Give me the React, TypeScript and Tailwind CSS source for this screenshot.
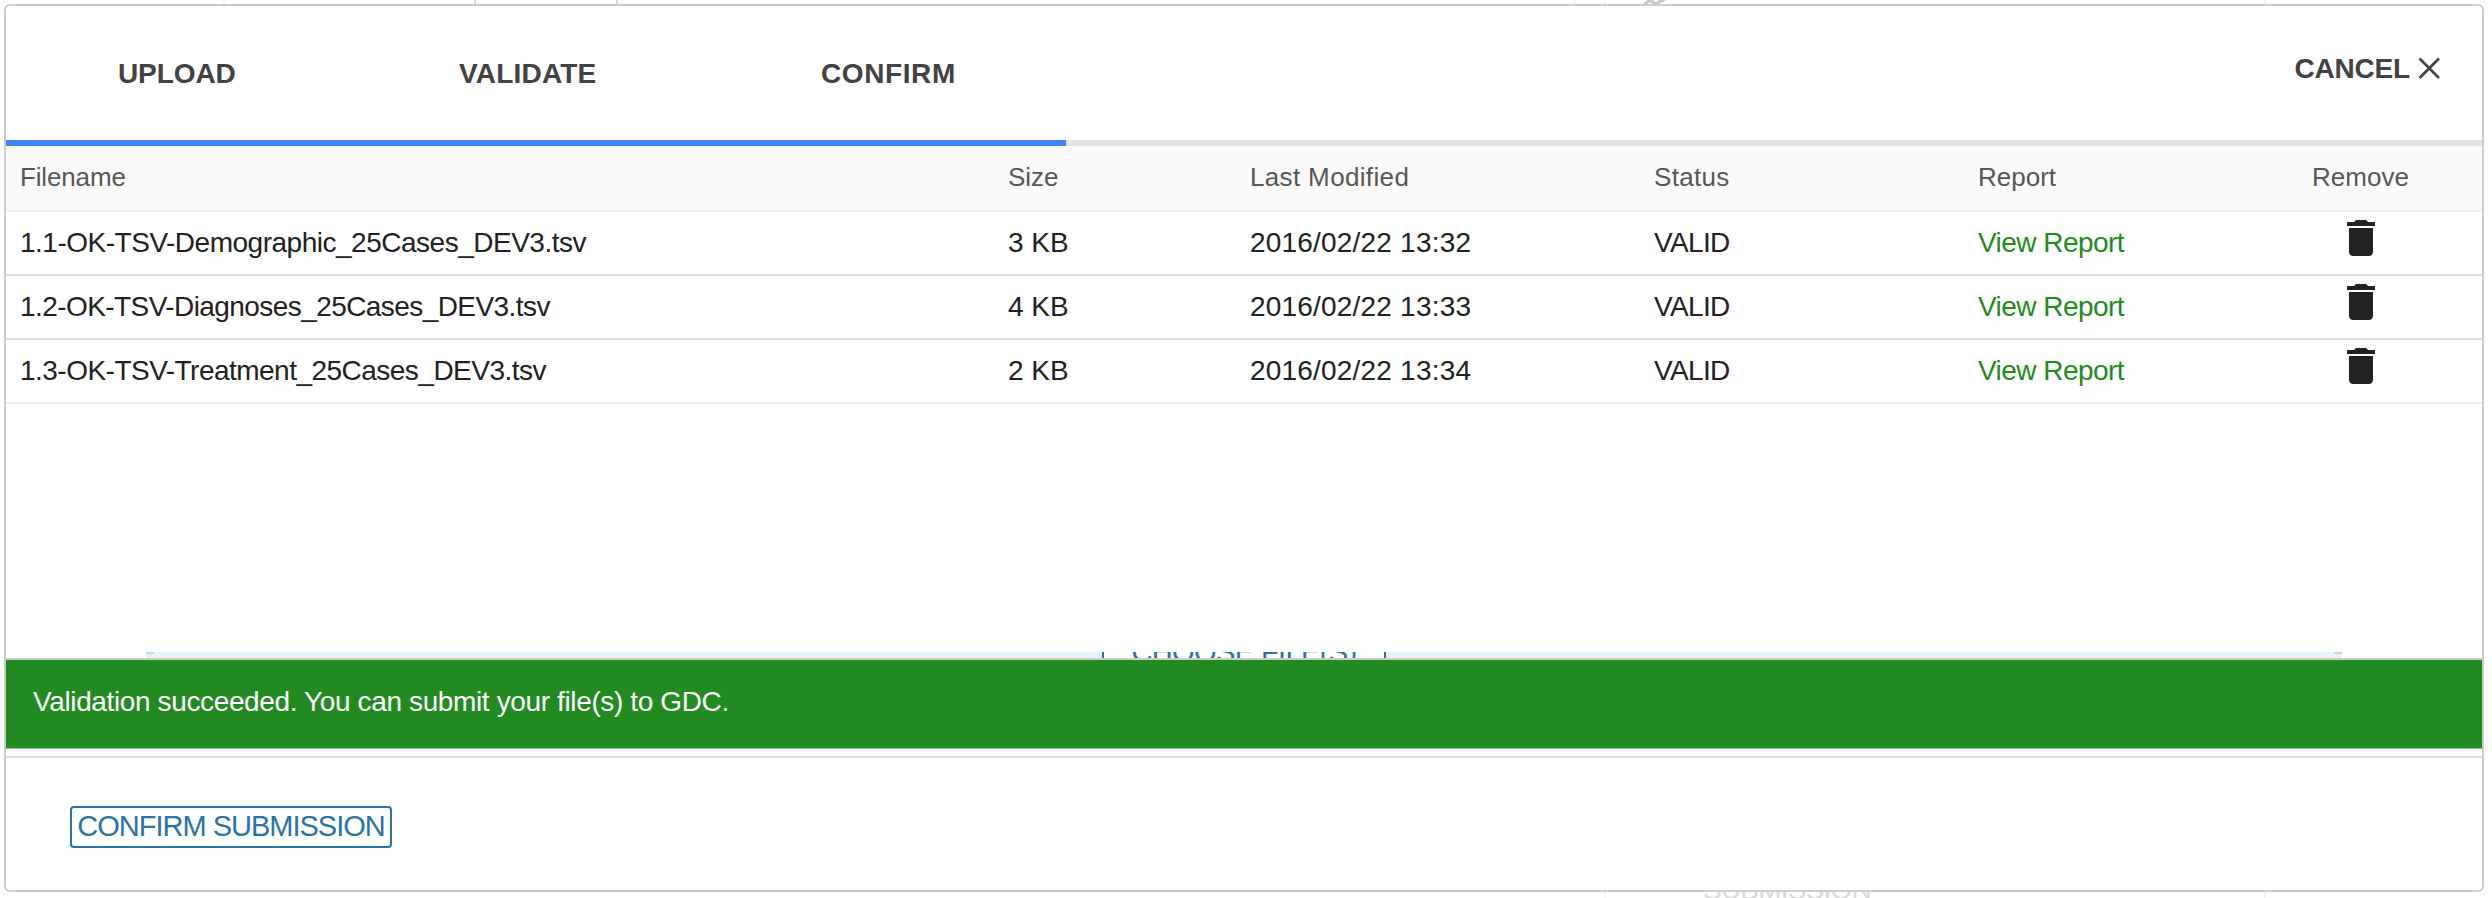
type FileRow = { name: string; tracking: string; size: string; modified: string };

const files: FileRow[] = [
  { name: '1.1-OK-TSV-Demographic_25Cases_DEV3.tsv', tracking: 'tracking-[-0.49px]', size: '3 KB', modified: '2016/02/22 13:32' },
  { name: '1.2-OK-TSV-Diagnoses_25Cases_DEV3.tsv', tracking: 'tracking-[-0.57px]', size: '4 KB', modified: '2016/02/22 13:33' },
  { name: '1.3-OK-TSV-Treatment_25Cases_DEV3.tsv', tracking: 'tracking-[-0.52px]', size: '2 KB', modified: '2016/02/22 13:34' },
];

const rowGrid = 'grid grid-cols-[988px_242px_404px_324px_261px_1fr] items-center pl-3.5 whitespace-nowrap';

function TrashIcon() {
  return (
    <svg viewBox="0 0 24 24" className="size-12" fill="#212121">
      <path d="M6 19c0 1.1.9 2 2 2h8c1.1 0 2-.9 2-2V7H6v12zM19 4h-3.5l-1-1h-5l-1 1H5v2h14V4z" />
    </svg>
  );
}

function PageBehind() {
  return (
    <div className="absolute inset-0 text-[#dadada]">
      <div className="absolute top-0 left-[223px] h-1 w-0.5 bg-[#f4f4f4]" />
      <div className="absolute top-0 left-[474px] h-1 w-36 border-x-2 border-[#d0e0e9]" />
      <div className="absolute top-0 left-[1574px] h-1 w-8 border-x-2 border-[#f6f6f6]" />
      <svg className="absolute top-0 left-[1640px] h-1 w-8" viewBox="0 0 32 4" fill="none" stroke="#c9c9c9" strokeWidth="3">
        <path d="M4 5 L10 0 M10 0 L16 5 M15 5 L22 0 M22 1 L28 -3 M10 -1 L14 3 L20 3" />
      </svg>
      <div className="absolute top-0 left-[2264px] h-1 w-0.5 bg-[#f4f4f4]" />
      <div className="absolute bottom-0 left-[1604px] h-1.5 w-0.5 bg-[#f6f6f6]" />
      <div className="absolute bottom-0 left-[2264px] h-1.5 w-0.5 bg-[#f4f4f4]" />
      <div className="absolute bottom-0 left-[1703px] flex h-1.5 flex-col justify-end overflow-hidden text-[28px] leading-4 tracking-[-0.8px]">
        SUBMISSION
      </div>
    </div>
  );
}

export default function App() {
  return (
    <div className="relative h-[898px] w-[2492px] overflow-hidden bg-white pt-1 pl-1 font-['Liberation_Sans',Arial,sans-serif]">
      <PageBehind />
      <main className="relative flex h-[888px] w-[2480px] flex-col overflow-hidden rounded-md border-2 border-[#cccccc] bg-white">
        <header className="flex h-[134px] shrink-0 justify-between text-[28px] font-bold text-[#424242]">
          <nav className="grid grid-cols-[341px_362px_auto] items-center pt-0.5 pl-[112px]">
            <span className="tracking-[-0.1px]">UPLOAD</span>
            <span className="tracking-[0.2px]">VALIDATE</span>
            <span className="tracking-[0.6px]">CONFIRM</span>
          </nav>
          <button className="mt-11 mr-[41px] flex h-10 items-center gap-[7px]">
            <span className="-mt-0.5 tracking-[-0.2px]">CANCEL</span>
            <svg viewBox="0 0 24 24" className="-mt-1 size-6" stroke="#424242" strokeWidth="2.6" fill="none">
              <path d="M2.5 2.5 L22 22 M22 2.5 L2.5 22" />
            </svg>
          </button>
        </header>

        <div className="h-1.5 shrink-0 bg-[#e4e4e4]">
          <div className="h-full w-[1060px] bg-[#4286f5]" />
        </div>

        <section className="shrink-0">
          <div className={`${rowGrid} h-[66px] border-b-2 border-[#eeeeee] bg-[#fafafa] pb-0.5 text-[26px] text-[#575757]`}>
            <span className="tracking-[-0.15px]">Filename</span>
            <span>Size</span>
            <span className="tracking-[0.35px]">Last Modified</span>
            <span className="tracking-[0.3px]">Status</span>
            <span>Report</span>
            <span className="text-center">Remove</span>
          </div>
          {files.map((f) => (
            <div
              key={f.name}
              className={`${rowGrid} h-16 border-b-2 border-[#dedede] text-[28px] text-[#212121] last:border-[#eeeeee]`}
            >
              <span className={f.tracking}>{f.name}</span>
              <span>{f.size}</span>
              <span className="tracking-[0.2px]">{f.modified}</span>
              <span className="tracking-[-0.65px]">VALID</span>
              <a className="tracking-[-0.55px] text-[#228b22]">View Report</a>
              <span className="flex justify-center pb-2.5">
                <TrashIcon />
              </span>
            </div>
          ))}
        </section>

        <div className="flex grow flex-col justify-end px-[140px]">
          <div className="flex h-1.5 justify-between overflow-hidden bg-[#e6f4fa]">
            <div className="h-0.5 w-2 bg-[#c5dadf]" />
            <div className="flex w-[284px] flex-col items-center overflow-hidden border-x-2 border-[#2a73a8] bg-white text-[29px] text-[#2a73a8]">
              <span className="-mt-4 leading-[32px] tracking-[-0.6px] whitespace-nowrap">CHOOSE FILE(S)</span>
            </div>
            <div className="h-0.5 w-2 bg-[#c5dadf]" />
          </div>
        </div>

        <div className="h-[91px] shrink-0 border-t-2 border-b border-t-[#cccccc] border-b-[#8fc98f] bg-[#228b22] pt-[26px] pl-[27px] text-[28px] leading-8 tracking-[-0.37px] text-white">
          Validation succeeded. You can submit your file(s) to GDC.
        </div>

        <footer className="mt-[7px] h-[134px] shrink-0 border-t-2 border-[#dddddd] pt-12 pl-16">
          <button className="flex h-[42px] w-[322px] items-center justify-center rounded border-2 border-[#2a73a8] pb-px text-[29px] tracking-[-1px] whitespace-nowrap text-[#2a73a8]">
            CONFIRM SUBMISSION
          </button>
        </footer>
      </main>
    </div>
  );
}
